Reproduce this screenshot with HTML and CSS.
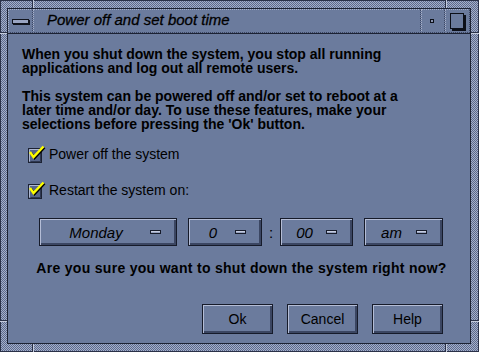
FILE: index.html
```html
<!DOCTYPE html>
<html lang="en">
   <head>
      <meta charset="UTF-8">
      <title>Power off and set boot time</title>
      <link rel="stylesheet" href="styles.css">
   </head>
   <body>
      <div class="window">
         <span class="tick tick-top tick-left"></span>
         <span class="tick tick-top tick-right"></span>
         <span class="tick tick-bottom tick-left"></span>
         <span class="tick tick-bottom tick-right"></span>
         <span class="tick tick-side tick-upper tick-l"></span>
         <span class="tick tick-side tick-upper tick-r"></span>
         <span class="tick tick-side tick-lower tick-l"></span>
         <span class="tick tick-side tick-lower tick-r"></span>
         <div class="inner">
            <div class="titlebar">
               <div class="tb-btn menu-btn"><span class="dash"></span></div>
               <div class="title">Power off and set boot time</div>
               <div class="tb-btn min-btn"><span class="dot"></span></div>
               <div class="tb-btn max-btn"><span class="square"></span></div>
            </div>
            <div class="content">
               <p class="msg">When you shut down the system, you stop all running<br>applications and log out all remote users.</p>
               <p class="msg msg-last">This system can be powered off and/or set to reboot at a<br>later time and/or day. To use these features, make your<br>selections before pressing the 'Ok' button.</p>
               <label class="check-row first">
                  <svg class="check" width="18" height="17" viewBox="0 0 18 17">
                     <rect x="0.5" y="2.5" width="13" height="14" fill="#56658a" stroke="#1c2233"/>
                     <path d="M1.5 15.5 V3.5 H12.5" fill="none" stroke="#aeb8d2"/>
                     <path d="M2.5 15.5 H12.5 V3.5" fill="none" stroke="#2e3750"/>
                     <path d="M3 7 L6.5 12 L16.5 1.5" fill="none" stroke="#000" stroke-width="2.4"/>
                     <path d="M2 6 L5.5 11 L15.5 0.5" fill="none" stroke="#ffff00" stroke-width="2.4"/>
                  </svg>
                  <span>Power off the system</span>
               </label>
               <label class="check-row second">
                  <svg class="check" width="18" height="17" viewBox="0 0 18 17">
                     <rect x="0.5" y="2.5" width="13" height="14" fill="#56658a" stroke="#1c2233"/>
                     <path d="M1.5 15.5 V3.5 H12.5" fill="none" stroke="#aeb8d2"/>
                     <path d="M2.5 15.5 H12.5 V3.5" fill="none" stroke="#2e3750"/>
                     <path d="M3 7 L6.5 12 L16.5 1.5" fill="none" stroke="#000" stroke-width="2.4"/>
                     <path d="M2 6 L5.5 11 L15.5 0.5" fill="none" stroke="#ffff00" stroke-width="2.4"/>
                  </svg>
                  <span>Restart the system on:</span>
               </label>
               <div class="time-row">
                  <div class="option opt-day"><span class="opt-label">Monday</span><span class="ind"></span></div>
                  <div class="option opt-hour"><span class="opt-label">0</span><span class="ind"></span></div>
                  <span class="colon">:</span>
                  <div class="option opt-min"><span class="opt-label">00</span><span class="ind"></span></div>
                  <div class="option opt-ampm"><span class="opt-label">am</span><span class="ind"></span></div>
               </div>
               <p class="question">Are you sure you want to shut down the system right now?</p>
               <div class="actions">
                  <button class="btn">Ok</button>
                  <button class="btn">Cancel</button>
                  <button class="btn">Help</button>
               </div>
            </div>
         </div>
      </div>
   </body>
</html>
```

FILE: styles.css
```css
body { margin: 0; background: #6b7b9d; font-family: "Liberation Sans", Arial, sans-serif; color: #000; }

/* window frame with dithered border */
.window { position: relative; width: 479px; height: 352px; box-sizing: border-box; padding: 8px 8px 8px 7px;
   background: repeating-conic-gradient(#a6afc8 0 25%, #5b6a8e 0 50%) 0 0 / 2px 2px;
   box-shadow: inset 1px 1px 0 #2a3148, inset -1px -1px 0 #2a3148; }
.tick { position: absolute; background: #2a3148; }
.tick-top, .tick-bottom { width: 1px; height: 8px; box-shadow: 1px 0 0 #c4cbdc; }
.tick-top { top: 0; }
.tick-bottom { bottom: 0; }
.tick-left { left: 32px; }
.tick-right { left: 445px; }
.tick-side { height: 1px; box-shadow: 0 1px 0 #c4cbdc; }
.tick-l { left: 0; width: 7px; }
.tick-r { right: 0; width: 8px; }
.tick-upper { top: 32px; }
.tick-lower { top: 320px; }

.inner { height: 100%; box-sizing: border-box; border: 1px solid #1c2233; display: flex; flex-direction: column; background: #6b7b9d; }

/* title bar */
.titlebar { display: flex; height: 24px; border-bottom: 1px solid #1c2233; }
.tb-btn, .title { box-sizing: border-box; border: 1px dotted #aab3cc; border-right-color: #3a4562; border-bottom-color: #3a4562; }
.tb-btn { display: flex; align-items: center; justify-content: center; }
.menu-btn { width: 25px; }
.min-btn { width: 24px; }
.max-btn { width: 25px; }
.title { flex: 1; padding: 0 0 2px 13px; font-size: 15px; font-style: italic; line-height: 20px; -webkit-text-stroke: 0.3px #000; }
.dash { width: 15px; height: 3px; background: #9aa5c2; border: 1px solid #10131c; box-shadow: 1px 1px 0 #10131c; }
.dot { width: 2px; height: 2px; background: #8a95b2; border: 1px solid #0c0f18; margin: 0 2px 1px 0; }
.square { width: 12px; height: 14px; border: 1px solid #0c0f18; box-shadow: 2px 2px 0 #0c0f18; margin: 0 1px 1px 0; }

/* dialog body */
.content { flex: 1; display: flex; flex-direction: column; padding: 13px 27px 9px 14px; }
.msg { margin: 0 0 14px; font-size: 14px; font-weight: bold; line-height: 14px; }
.msg-last { margin-bottom: 0; }

.check-row { display: flex; align-items: center; height: 18px; margin-left: 6px; font-size: 14px; }
.check-row.first { margin-top: 14px; }
.check-row.second { margin-top: 18px; }
.check { margin-right: 3px; overflow: visible; }

.time-row { display: flex; align-items: center; margin: 19px 0 0 17px; }
.option { display: flex; align-items: center; height: 28px; box-sizing: border-box; border: 1px solid #161b2a;
   box-shadow: inset 1px 1px 0 #b4bdd6, inset -2px -2px 0 #3b4662; font-size: 15px; font-style: italic; }
.opt-label { flex: 1; text-align: center; padding-left: 2px; }
.ind { width: 9px; height: 2px; margin-right: 15px; background: #98a3c0; border: 1px solid #161b2a; box-shadow: inset 0 1px 0 #c6cde0; }
.opt-day { width: 138px; margin-right: 11px; }
.opt-hour { width: 74px; }
.colon { width: 18px; text-align: center; font-size: 15px; }
.opt-min { width: 73px; margin-right: 11px; }
.opt-ampm { width: 79px; }

.question { margin: 15px -18px 0 0; font-size: 14px; font-weight: bold; line-height: 14px; letter-spacing: 0.3px; text-align: center; white-space: nowrap; }

.actions { display: flex; justify-content: flex-end; gap: 14px; margin-top: auto; }
.btn { width: 71px; height: 30px; padding: 0; background: #6b7b9d; color: #000; border: 1px solid #161b2a;
   box-shadow: inset 1px 1px 0 #b4bdd6, inset -2px -2px 0 #3b4662; font-family: "Liberation Sans", Arial, sans-serif; font-size: 14px; }
```
